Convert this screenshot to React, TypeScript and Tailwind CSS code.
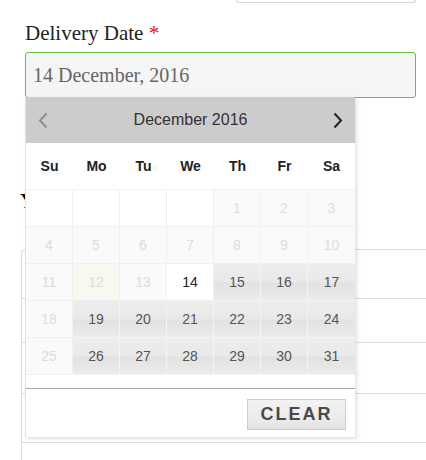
import React from 'react';

const weekdays = ['Su', 'Mo', 'Tu', 'We', 'Th', 'Fr', 'Sa'];

type Day = { n: number | null; state: 'empty' | 'disabled' | 'today' | 'selected' | 'open' };

function buildDays(): Day[][] {
  const cells: Day[] = [];
  for (let i = 0; i < 4; i++) cells.push({ n: null, state: 'empty' });
  for (let d = 1; d <= 31; d++) {
    let state: Day['state'] = 'open';
    // sundays can't be picked
    if ((d + 3) % 7 === 0) state = 'disabled';
    if (d < 14) state = d === 12 ? 'today' : 'disabled';
    if (d === 14) state = 'selected';
    cells.push({ n: d, state });
  }
  const rows: Day[][] = [];
  for (let i = 0; i < cells.length; i += 7) rows.push(cells.slice(i, i + 7));
  return rows;
}

function DayCell({ day }: { day: Day }) {
  const base =
    'flex items-center justify-center border-r border-b border-[#f0f0f0] text-[14px] last:border-r-0';
  if (day.state === 'empty') return <div className={`${base} bg-white`} />;
  if (day.state === 'disabled')
    return <div className={`${base} bg-[#fafafa] text-[#dcdcdc]`}>{day.n}</div>;
  if (day.state === 'today')
    return <div className={`${base} bg-[#f8f8f0] text-[#dcdcdc]`}>{day.n}</div>;
  if (day.state === 'selected')
    return <div className={`${base} bg-white text-[#222]`}>{day.n}</div>;
  return (
    <div
      className={`${base} border-[#f4f4f4] text-[#555] bg-[linear-gradient(to_bottom,#ededed_0%,#e9e9e9_50%,#e2e2e2_53%,#ebebeb_100%)]`}
    >
      {day.n}
    </div>
  );
}

function Calendar() {
  const rows = buildDays();
  return (
    <div className="absolute left-[25px] top-[97px] z-10 w-[330px] border-l border-[#e2e2e2] bg-white font-['Liberation_Sans',Arial,sans-serif] shadow-[2px_2px_4px_rgba(0,0,0,0.12)]">
      {/* month header */}
      <div className="flex h-[46px] items-center justify-between bg-[#cccccc] pl-[12px] pr-[12px]">
        <svg width="10" height="17" viewBox="0 0 10 17" fill="none">
          <path d="M8.5 1.5L2 8.5l6.5 7" stroke="#8f8f8f" strokeWidth="2" />
        </svg>
        <span className="text-[16px] text-[#333]">December 2016</span>
        <svg width="10" height="17" viewBox="0 0 10 17" fill="none">
          <path d="M1.5 1.5L8 8.5l-6.5 7" stroke="#222" strokeWidth="2" />
        </svg>
      </div>

      {/* weekdays */}
      <div className="grid h-[47px] grid-cols-7 border-b border-[#f0f0f0]">
        {weekdays.map((w) => (
          <div key={w} className="flex items-center justify-center text-[14px] font-bold text-[#222]">
            {w}
          </div>
        ))}
      </div>

      {/* days */}
      {rows.map((row, i) => (
        <div key={i} className="grid h-[37px] grid-cols-7">
          {row.map((d, j) => (
            <DayCell key={j} day={d} />
          ))}
        </div>
      ))}

      <div className="h-[13px]" />

      {/* footer */}
      <div className="flex h-[49px] justify-end border-t border-[#a8a8a8] pr-[9px] pt-[10px]">
        <button className="h-[31px] w-[99px] border border-[#cfcfcf] bg-[linear-gradient(to_bottom,#f2f2f2_0%,#ececec_60%,#e2e2e2_100%)] text-[18px] font-bold tracking-[2px] text-[#4a4a4a]">
          CLEAR
        </button>
      </div>
    </div>
  );
}

export default function App() {
  return (
    <div className="relative h-[460px] w-[426px] overflow-hidden bg-white">
      {/* bottom edge of a box above */}
      <div className="ml-[236px] h-[3px] w-[180px] rounded-b-[3px] border-x border-b border-[#d6d6d6]" />

      <div className="px-[25px] pt-[15px]">
        <label className="block font-['Liberation_Serif',serif] text-[21px] leading-[30px] text-[#222]">
          Delivery Date <span className="text-[#e0161b]">*</span>
        </label>
        <div className="mt-[4px] flex h-[46px] w-[391px] items-center rounded-[3px] border border-[#6cbf3c] bg-[#f5f5f5] px-[7px] font-['Liberation_Serif',serif] text-[20px] text-[#666]">
          14 December, 2016
        </div>
      </div>

      {/* content behind the picker */}
      <h3 className="ml-[20px] mt-[89px] font-['Liberation_Serif',serif] text-[22px] font-bold leading-[28px] text-black">
        Your Order
      </h3>
      <div className="ml-[21px] mt-[34px] w-[420px] rounded-tl-[4px] border-l border-t border-[#dcdcdc]">
        <div className="h-[49px] border-b border-[#dcdcdc]" />
        <div className="h-[44px] border-b border-[#dcdcdc]" />
        <div className="h-[51px] border-b border-[#dcdcdc]" />
        <div className="h-[49px] border-b border-[#dcdcdc]" />
        <div className="h-[40px]" />
      </div>

      <Calendar />
    </div>
  );
}
